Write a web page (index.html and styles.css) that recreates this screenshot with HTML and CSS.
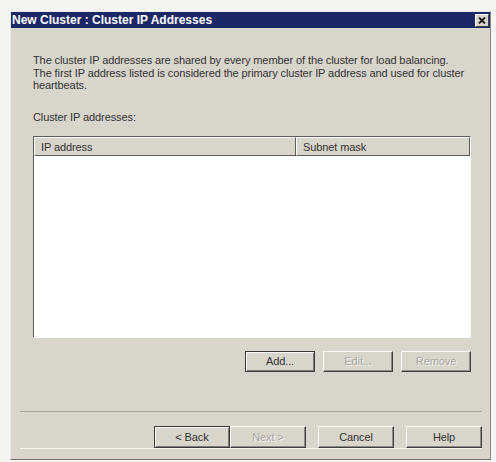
FILE: index.html
```html
<!DOCTYPE html>
<html lang="en">
<head>
  <meta charset="UTF-8" />
  <title>New Cluster : Cluster IP Addresses</title>
  <link rel="stylesheet" href="styles.css">
</head>
<body>
  <div class="window">
    <!-- title bar -->
    <div class="titlebar">
      <span class="title">New Cluster : Cluster IP Addresses</span>
      <span class="close-btn">
        <svg width="8" height="7" viewBox="0 0 8 7"><path d="M1 0.5 L7 6.5 M7 0.5 L1 6.5" stroke="#1a1a1a" stroke-width="1.8" /></svg>
      </span>
    </div>

    <div class="dialog-body">
      <p class="intro">The cluster IP addresses are shared by every member of the cluster for load balancing.<br>The first IP address listed is considered the primary cluster IP address and used for cluster<br>heartbeats.</p>

      <div class="label">Cluster IP addresses:</div>

      <div class="list">
        <div class="list-head">
          <div class="col col-ip">IP address</div>
          <div class="col col-mask">Subnet mask</div>
        </div>
        <div class="list-rows"></div>
      </div>

      <div class="list-actions">
        <button class="btn btn-default">Add...</button>
        <button class="btn" disabled>Edit...</button>
        <button class="btn" disabled>Remove</button>
      </div>
    </div>

    <div class="footer">
      <div class="nav-pair">
        <button class="btn btn-wide btn-default">&lt; Back</button>
        <button class="btn btn-wide" disabled>Next &gt;</button>
      </div>
      <button class="btn btn-wide">Cancel</button>
      <button class="btn btn-wide">Help</button>
    </div>
  </div>
</body>
</html>
```

FILE: styles.css
```css
body {
  margin: 0;
  padding: 11px 0 0 10px;
  background: #f4f4f2;
  font-family: "Liberation Sans", Arial, sans-serif;
  font-size: 11px;
  color: #333;
}

.window {
  box-sizing: border-box;
  width: 481px;
  height: 449px;
  background: #d8d5cd;
  border: 1px solid;
  border-color: #ecebe6 #8a8883 #6f6d69 #ecebe6;
}

/* Title bar */
.titlebar {
  height: 16px;
  background: #1c2866;
  color: #fff;
  display: flex;
  align-items: center;
  justify-content: space-between;
  padding: 0 1px 0 1px;
}

.title {
  font-weight: bold;
  font-size: 12px;
}

.close-btn {
  box-sizing: border-box;
  width: 14px;
  height: 13px;
  background: #d8d5cd;
  border: 1px solid;
  border-color: #fff #404040 #404040 #fff;
  display: flex;
  align-items: center;
  justify-content: center;
}

/* Content */
.dialog-body {
  padding: 26px 19px 0 22px;
}

.intro {
  margin: 0;
  line-height: 12.5px;
  letter-spacing: -0.1px;
  white-space: nowrap;
}

.label {
  margin-top: 19px;
  line-height: 13px;
  letter-spacing: -0.1px;
}

.list {
  margin-top: 12px;
  height: 202px;
  box-sizing: border-box;
  border: 1px solid;
  border-color: #5e5c58 #fff #fff #5e5c58;
  background: #fff;
  display: flex;
  flex-direction: column;
}

.list-head {
  display: flex;
  height: 19px;
  background: #d8d5cd;
}

.col {
  box-sizing: border-box;
  border: 1px solid;
  border-color: #fff #5f5d59 #5f5d59 #fff;
  padding: 3px 0 0 6px;
  line-height: 13px;
  letter-spacing: -0.1px;
}

.col-ip {
  width: 262px;
}

.col-mask {
  flex: 1;
}

.list-rows {
  flex: 1;
}

.list-actions {
  margin-top: 13px;
  display: flex;
  justify-content: flex-end;
  gap: 8px;
}

/* Buttons */
.btn {
  box-sizing: border-box;
  width: 70px;
  height: 21px;
  padding: 0;
  background: #d8d5cd;
  font-family: inherit;
  font-size: 11px;
  letter-spacing: -0.1px;
  color: #333;
  border: 1px solid;
  border-color: #fbfbfa #3e3d3b #3e3d3b #fbfbfa;
  box-shadow: inset -1px -1px 0 #8d8b86;
}

.btn:disabled {
  color: #aaa8a2;
  text-shadow: 1px 1px 0 #f4f3f0;
}

.btn-default {
  border-color: #3a3937;
  box-shadow: inset 1px 1px 0 #fbfbfa, inset -1px -1px 0 #7d7b77;
}

.btn-wide {
  width: 76px;
  height: 22px;
}

.footer {
  margin: 39px 8px 0 9px;
  border-top: 1px solid #a8a59f;
  box-shadow: 0 1px 0 #f3f2ee;
  padding-top: 14px;
  display: flex;
  justify-content: flex-end;
  gap: 12px;
}

.nav-pair {
  display: flex;
}
```
